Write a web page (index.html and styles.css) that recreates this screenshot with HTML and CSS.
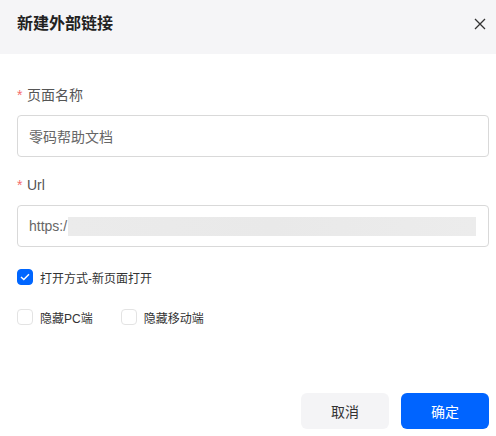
FILE: index.html
```html
<!DOCTYPE html>
<html lang="zh">
<head>
<meta charset="utf-8">
<link rel="stylesheet" href="styles.css">
</head>
<body>
<div class="dialog">
  <div class="header">
    <span class="title">新建外部链接</span>
    <span class="close" aria-label="关闭">
      <svg width="12" height="12" viewBox="0 0 12 12"><path d="M1 1 L11 11 M11 1 L1 11" stroke="#333" stroke-width="1.3" fill="none"/></svg>
    </span>
  </div>
  <div class="body">
    <div class="field">
      <div class="label"><span class="req">*</span>页面名称</div>
      <div class="input">零码帮助文档</div>
    </div>
    <div class="field">
      <div class="label"><span class="req">*</span>Url</div>
      <div class="input">https:/<span class="blur"></span></div>
    </div>
    <div class="checks">
      <label class="check"><span class="box on"><svg width="10" height="8" viewBox="0 0 10 8"><path d="M1 4 L3.8 6.6 L9 1.2" stroke="#fff" stroke-width="1.4" fill="none"/></svg></span>打开方式-新页面打开</label>
    </div>
    <div class="checks">
      <label class="check"><span class="box"></span>隐藏PC端</label>
      <label class="check"><span class="box"></span>隐藏移动端</label>
    </div>
  </div>
  <div class="footer">
    <button class="btn cancel">取消</button>
    <button class="btn ok">确定</button>
  </div>
</div>
</body>
</html>
```
FILE: styles.css
```css
html, body {
  margin: 0;
  padding: 0;
  background: #fff;
  font-family: "Liberation Sans", "Noto Sans CJK SC", sans-serif;
}
.dialog {
  width: 496px;
  height: 436px;
  display: flex;
  flex-direction: column;
}
.header {
  height: 54px;
  background: #f5f5f7;
  display: flex;
  align-items: center;
  justify-content: space-between;
  padding: 0 10px 0 17px;
  box-sizing: border-box;
}
.title {
  font-size: 16px;
  font-weight: 700;
  color: #222;
  line-height: 20px;
  margin-top: -6px;
}
.close {
  width: 12px;
  height: 12px;
  display: flex;
  margin-top: -6px;
}
.body {
  padding: 31px 7px 0 17px;
}
.field {
  margin-bottom: 18px;
}
.label {
  font-size: 14px;
  line-height: 20px;
  color: #555;
  margin-bottom: 10px;
  display: flex;
  align-items: center;
}
.req {
  color: #f56c6c;
  width: 10px;
}
.input {
  height: 42px;
  box-sizing: border-box;
  border: 1px solid #d9d9d9;
  border-radius: 4px;
  padding: 0 11px;
  display: flex;
  align-items: center;
  font-size: 14px;
  color: #666;
}
.blur {
  display: inline-block;
  width: 408px;
  height: 19px;
  margin-left: 1px;
  background: linear-gradient(90deg, #ebebeb 0%, #e9e9e9 50%, #ececec 100%);
}
.checks {
  display: flex;
  gap: 28px;
  height: 20px;
  align-items: center;
  margin-top: 20px;
  margin-bottom: 20px;
}
.check {
  display: flex;
  align-items: center;
  font-size: 12px;
  color: #333;
  gap: 7px;
}
.box {
  width: 16px;
  height: 16px;
  box-sizing: border-box;
  border: 1px solid #e3e3e3;
  border-radius: 4px;
  display: flex;
  align-items: center;
  justify-content: center;
  background: #fff;
}
.box.on {
  background: #0066ff;
  border-color: #0066ff;
}
.footer {
  margin-top: auto;
  display: flex;
  justify-content: flex-end;
  gap: 12px;
  padding: 0 7px 7px 0;
}
.btn {
  width: 88px;
  height: 36px;
  border: none;
  border-radius: 6px;
  font-family: "Liberation Sans", "Noto Sans CJK SC", sans-serif;
  font-size: 14px;
}
.cancel {
  background: #f4f4f6;
  color: #333;
}
.ok {
  background: #0064ff;
  color: #fff;
}
```
